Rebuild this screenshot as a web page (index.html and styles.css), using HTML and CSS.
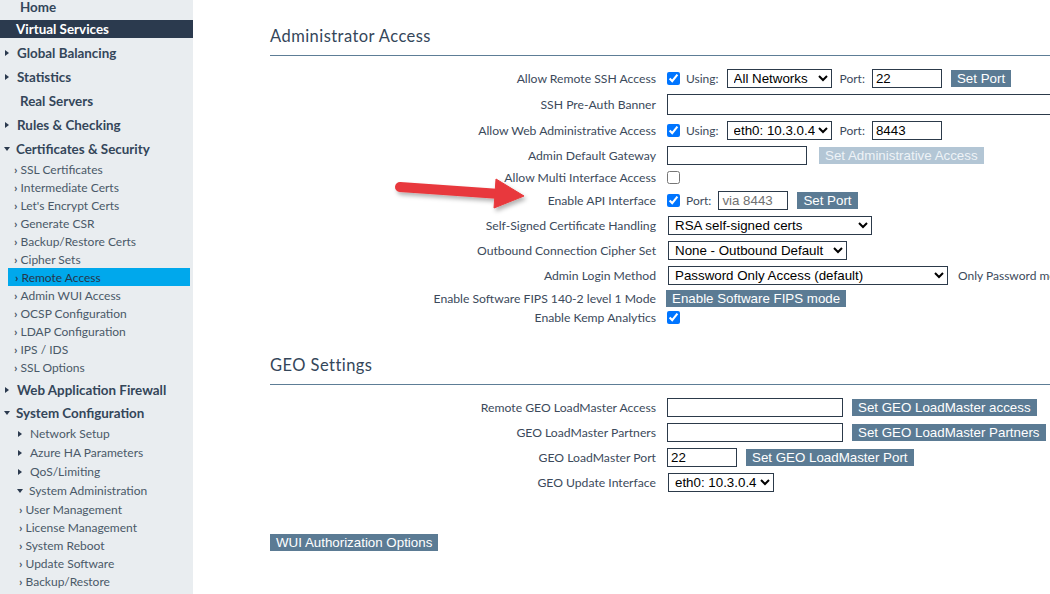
FILE: index.html
```html
<!DOCTYPE html>
<html>
<head>
<meta charset="utf-8">
<title>Remote Access</title>
<link rel="stylesheet" href="styles.css">
</head>
<body>
<div class="page">
  <nav class="sidebar">
    <div class="nav-top home">Home</div>
    <div class="nav-top active">Virtual Services</div>
    <div class="nav-top"><span class="tri-r"></span>Global Balancing</div>
    <div class="nav-top"><span class="tri-r"></span>Statistics</div>
    <div class="nav-top plain">Real Servers</div>
    <div class="nav-top"><span class="tri-r"></span>Rules &amp; Checking</div>
    <div class="nav-top short"><span class="tri-d"></span>Certificates &amp; Security</div>
    <div class="nav-sub"><span class="chev">›</span>SSL Certificates</div>
    <div class="nav-sub"><span class="chev">›</span>Intermediate Certs</div>
    <div class="nav-sub"><span class="chev">›</span>Let's Encrypt Certs</div>
    <div class="nav-sub"><span class="chev">›</span>Generate CSR</div>
    <div class="nav-sub"><span class="chev">›</span>Backup/Restore Certs</div>
    <div class="nav-sub"><span class="chev">›</span>Cipher Sets</div>
    <div class="nav-sub selected"><span class="chev">›</span>Remote Access</div>
    <div class="nav-sub"><span class="chev">›</span>Admin WUI Access</div>
    <div class="nav-sub"><span class="chev">›</span>OCSP Configuration</div>
    <div class="nav-sub"><span class="chev">›</span>LDAP Configuration</div>
    <div class="nav-sub"><span class="chev">›</span>IPS / IDS</div>
    <div class="nav-sub"><span class="chev">›</span>SSL Options</div>
    <div class="nav-top waf"><span class="tri-r"></span>Web Application Firewall</div>
    <div class="nav-top sys"><span class="tri-d"></span>System Configuration</div>
    <div class="nav-group"><span class="tri-r"></span>Network Setup</div>
    <div class="nav-group"><span class="tri-r"></span>Azure HA Parameters</div>
    <div class="nav-group"><span class="tri-r"></span>QoS/Limiting</div>
    <div class="nav-group"><span class="tri-d"></span>System Administration</div>
    <div class="nav-leaf"><span class="chev">›</span>User Management</div>
    <div class="nav-leaf"><span class="chev">›</span>License Management</div>
    <div class="nav-leaf"><span class="chev">›</span>System Reboot</div>
    <div class="nav-leaf"><span class="chev">›</span>Update Software</div>
    <div class="nav-leaf"><span class="chev">›</span>Backup/Restore</div>
  </nav>

  <main class="content">
    <section class="panel admin">
      <h2 class="section-title">Administrator Access</h2>
      <div class="form">
        <div class="row h26">
          <div class="label">Allow Remote SSH Access</div>
          <div class="ctl">
            <input type="checkbox" checked>
            <span class="txt">Using:</span>
            <select class="sel w105"><option>All Networks</option></select>
            <span class="txt">Port:</span>
            <input class="inp w70" type="text" value="22">
            <button class="btn">Set Port</button>
          </div>
        </div>
        <div class="row h26">
          <div class="label">SSH Pre-Auth Banner</div>
          <div class="ctl"><input class="inp banner" type="text"></div>
        </div>
        <div class="row h26">
          <div class="label">Allow Web Administrative Access</div>
          <div class="ctl">
            <input type="checkbox" checked>
            <span class="txt">Using:</span>
            <select class="sel w105"><option>eth0: 10.3.0.4</option></select>
            <span class="txt">Port:</span>
            <input class="inp w70" type="text" value="8443">
          </div>
        </div>
        <div class="row h24">
          <div class="label">Admin Default Gateway</div>
          <div class="ctl">
            <input class="inp w140" type="text">
            <button class="btn disabled gw-btn">Set Administrative Access</button>
          </div>
        </div>
        <div class="row h20">
          <div class="label">Allow Multi Interface Access</div>
          <div class="ctl"><input type="checkbox"></div>
        </div>
        <div class="row h26">
          <div class="label">Enable API Interface</div>
          <div class="ctl">
            <input type="checkbox" checked>
            <span class="txt">Port:</span>
            <input class="inp w70 muted" type="text" value="via 8443">
            <button class="btn">Set Port</button>
          </div>
        </div>
        <div class="row h24">
          <div class="label">Self-Signed Certificate Handling</div>
          <div class="ctl"><select class="sel w204"><option>RSA self-signed certs</option></select></div>
        </div>
        <div class="row h26">
          <div class="label">Outbound Connection Cipher Set</div>
          <div class="ctl"><select class="sel w179"><option>None - Outbound Default</option></select></div>
        </div>
        <div class="row h24">
          <div class="label">Admin Login Method</div>
          <div class="ctl">
            <select class="sel w280"><option>Password Only Access (default)</option></select>
            <span class="note">Only Password mode</span>
          </div>
        </div>
        <div class="row h22">
          <div class="label">Enable Software FIPS 140-2 level 1 Mode</div>
          <div class="ctl"><button class="btn fips">Enable Software FIPS mode</button></div>
        </div>
        <div class="row h16">
          <div class="label">Enable Kemp Analytics</div>
          <div class="ctl"><input type="checkbox" checked></div>
        </div>
      </div>
    </section>

    <section class="panel geo">
      <h2 class="section-title">GEO Settings</h2>
      <div class="form">
        <div class="row h25">
          <div class="label">Remote GEO LoadMaster Access</div>
          <div class="ctl">
            <input class="inp w176" type="text">
            <button class="btn">Set GEO LoadMaster access</button>
          </div>
        </div>
        <div class="row h25">
          <div class="label">GEO LoadMaster Partners</div>
          <div class="ctl">
            <input class="inp w176" type="text">
            <button class="btn">Set GEO LoadMaster Partners</button>
          </div>
        </div>
        <div class="row h25">
          <div class="label">GEO LoadMaster Port</div>
          <div class="ctl">
            <input class="inp w70" type="text" value="22">
            <button class="btn">Set GEO LoadMaster Port</button>
          </div>
        </div>
        <div class="row h25">
          <div class="label">GEO Update Interface</div>
          <div class="ctl"><select class="sel w106"><option>eth0: 10.3.0.4</option></select></div>
        </div>
      </div>
    </section>

    <div class="wui">
      <button class="btn">WUI Authorization Options</button>
    </div>
  </main>

  <svg class="arrow" width="160" height="60" viewBox="0 0 160 60">
    <defs>
      <filter id="sh" x="-20%" y="-40%" width="140%" height="180%">
        <feDropShadow dx="2" dy="3" stdDeviation="2" flood-color="#000" flood-opacity="0.3"/>
      </filter>
    </defs>
    <g filter="url(#sh)" fill="#e8393c" stroke="#e8393c">
      <line x1="20" y1="22" x2="120" y2="29" stroke-width="10" stroke-linecap="round"/>
      <polygon points="116,14 144,31 114,43" stroke-width="1" stroke-linejoin="round"/>
    </g>
  </svg>
</div>
</body>
</html>
```

FILE: styles.css
```css
* { box-sizing: border-box; }

body {
  margin: 0;
  font-family: Lato, "Open Sans", sans-serif;
  background: #ffffff;
  overflow: hidden;
}

.page {
  display: flex;
  width: 1050px;
  height: 594px;
  position: relative;
  overflow: hidden;
}

/* ---------- sidebar ---------- */
.sidebar {
  width: 193px;
  flex: none;
  background: #e9edf0;
  white-space: nowrap;
}

.nav-top {
  height: 24px;
  display: flex;
  align-items: center;
  padding-left: 5px;
  font-size: 13.4px;
  font-weight: 700;
  color: #34465a;
}
.nav-top.home {
  height: 18px;
  margin-top: -2px;
  padding-left: 20px;
}
.nav-top.active {
  height: 18px;
  margin-top: 4px;
  margin-bottom: 3px;
  padding-left: 16px;
  background: #2b3a4e;
  color: #ffffff;
}
.nav-top.plain { padding-left: 20px; }
.nav-top.short { height: 23px; padding-left: 4px; }
.nav-top.waf { margin-top: 2px; }
.nav-top.sys { height: 22px; padding-left: 4px; }

.tri-r {
  width: 0;
  height: 0;
  border-left: 4px solid #2b3a4e;
  border-top: 3.5px solid transparent;
  border-bottom: 3.5px solid transparent;
  margin-right: 8px;
  flex: none;
}
.tri-d {
  width: 0;
  height: 0;
  border-top: 4px solid #2b3a4e;
  border-left: 3.5px solid transparent;
  border-right: 3.5px solid transparent;
  margin-right: 6px;
  flex: none;
}

.nav-sub {
  height: 18px;
  display: flex;
  align-items: center;
  padding-left: 14px;
  font-size: 12px;
  color: #4a5968;
}
.chev {
  margin-right: 3px;
  font-size: 12px;
  font-weight: 700;
}
.nav-sub.selected {
  background: #00a8ec;
  margin: 0 3px 0 8px;
  padding-left: 7px;
  color: #26364a;
}

.nav-group {
  height: 19px;
  display: flex;
  align-items: center;
  padding-left: 18px;
  font-size: 12px;
  color: #4a5968;
}
.nav-group .tri-d { margin-right: 6px; margin-left: -1px; }
.nav-group .tri-r { margin-right: 8px; }

.nav-leaf {
  height: 18px;
  display: flex;
  align-items: center;
  padding-left: 19px;
  font-size: 12px;
  color: #4a5968;
}

/* ---------- content ---------- */
.content {
  flex: 1;
  min-width: 0;
  padding-left: 77px;
  white-space: nowrap;
}

.section-title {
  margin: 0;
  height: 31px;
  padding-top: 1px;
  line-height: 20px;
  padding-bottom: 9px;
  border-bottom: 1px solid #5d7d96;
  font-size: 16.5px;
  font-weight: 400;
  letter-spacing: 0.45px;
  color: #34465a;
}

.admin { padding-top: 25px; }
.geo { margin-top: 29px; }

.form { margin-top: 10px; }
.admin .form { margin-top: 9px; }

.row {
  display: flex;
  align-items: center;
}
.h16 { height: 16px; }
.h20 { height: 20px; }
.h22 { height: 22px; }
.h24 { height: 24px; }
.h25 { height: 25px; }
.h26 { height: 26px; }

.label {
  width: 386px;
  flex: none;
  margin-right: 11px;
  text-align: right;
  font-size: 12.2px;
  color: #3c4a5b;
}

.ctl {
  display: flex;
  align-items: center;
}

.ctl input[type="checkbox"] {
  margin: 0;
  width: 13px;
  height: 13px;
}

.txt {
  font-size: 12px;
  color: #3c4a5b;
  margin: 0 7px 0 6px;
}

.sel {
  height: 19px;
  border: 1px solid #2c3a4a;
  border-radius: 0;
  background: #ffffff;
  color: #000000;
  font: 13.33px "Liberation Sans", Arial, sans-serif;
  padding: 0 0 0 2px;
  margin: 0 2px 0 1px;
}
.w105 { width: 105px; }
.w106 { width: 106px; }
.w204 { width: 204px; }
.w179 { width: 179px; }
.w280 { width: 280px; }

.inp {
  height: 19px;
  border: 1px solid #2c3a4a;
  border-radius: 0;
  background: #ffffff;
  color: #000000;
  font: 13.33px "Liberation Sans", Arial, sans-serif;
  padding: 0 3px;
  margin: 0;
}
.w70 { width: 70px; }
.w140 { width: 140px; }
.w176 { width: 176px; }
.banner { width: 420px; height: 21px; }
.muted { color: #707070; }

.btn {
  height: 17px;
  line-height: 17px;
  padding: 0 6px;
  border: 0;
  border-radius: 0;
  background: #5b7b94;
  color: #ffffff;
  font: 13.33px "Liberation Sans", Arial, sans-serif;
  margin-left: 9px;
}
.btn.disabled {
  background: #b3c6d5;
  color: #eef3f7;
}
.gw-btn { margin-left: 12px; }
.fips { margin-left: -1px; }

.note {
  font-size: 12px;
  color: #3c4a5b;
  margin-left: 8px;
}

.wui {
  margin-top: 36px;
}
.wui .btn { margin-left: 0; }

/* ---------- annotation arrow ---------- */
.arrow {
  position: absolute;
  left: 380px;
  top: 165px;
}
```
